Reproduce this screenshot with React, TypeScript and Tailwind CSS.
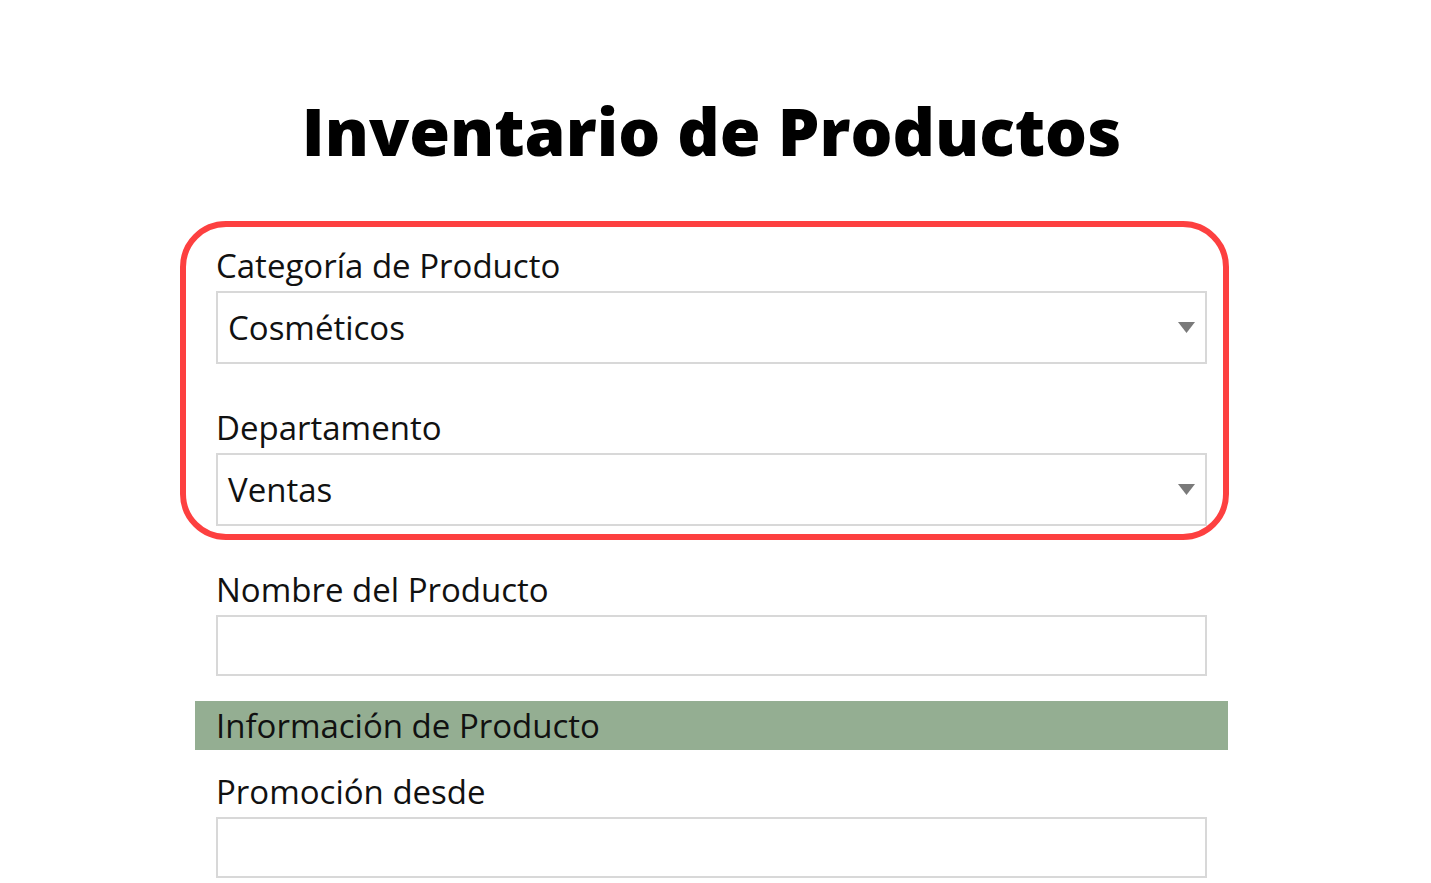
import React from 'react';

const Caret = () => (
  <svg width="17" height="11" viewBox="0 0 17 11" className="shrink-0">
    <polygon points="0,0 17,0 8.5,11" fill="#7a7a7a" />
  </svg>
);

function Label({ children }: { children: React.ReactNode }) {
  return <div className="text-[33px] leading-[44px] text-[#111111] mb-[3px]">{children}</div>;
}

function SelectBox({ value }: { value: string }) {
  return (
    <div className="h-[73px] border-2 border-[#d8d8d8] flex items-center justify-between pl-[10px] pr-[10px]">
      <span className="text-[33px] leading-[44px] text-[#111111]">{value}</span>
      <Caret />
    </div>
  );
}

function TextBox() {
  return <div className="h-[61px] border-2 border-[#d8d8d8]" />;
}

export default function App() {
  return (
    <div className="min-h-screen bg-white font-['Open_Sans',sans-serif]">
      <div className="w-[1033px] ml-[195px] pt-[85px]">
        <h1 className="text-center text-[66px] font-extrabold leading-[90px] text-black">
          Inventario de Productos
        </h1>

        <div className="px-[21px] mt-[69px]">
          <div className="relative">
            {/* highlight around the first two fields */}
            <div className="absolute -left-[36px] -right-[22px] -top-[23px] -bottom-[14px] border-[6px] border-[#fd4040] rounded-[46px] pointer-events-none" />
            <Label>Categoría de Producto</Label>
            <SelectBox value="Cosméticos" />
            <div className="mt-[42px]">
              <Label>Departamento</Label>
              <SelectBox value="Ventas" />
            </div>
          </div>

          <div className="mt-[42px]">
            <Label>Nombre del Producto</Label>
            <TextBox />
          </div>
        </div>

        <div className="mt-[25px] h-[49px] bg-[#94ae92] pl-[21px] pt-[3px]">
          <span className="text-[33px] leading-[44px] text-[#111111]">Información de Producto</span>
        </div>

        <div className="px-[21px] mt-[20px]">
          <Label>Promoción desde</Label>
          <TextBox />
        </div>
      </div>
    </div>
  );
}
